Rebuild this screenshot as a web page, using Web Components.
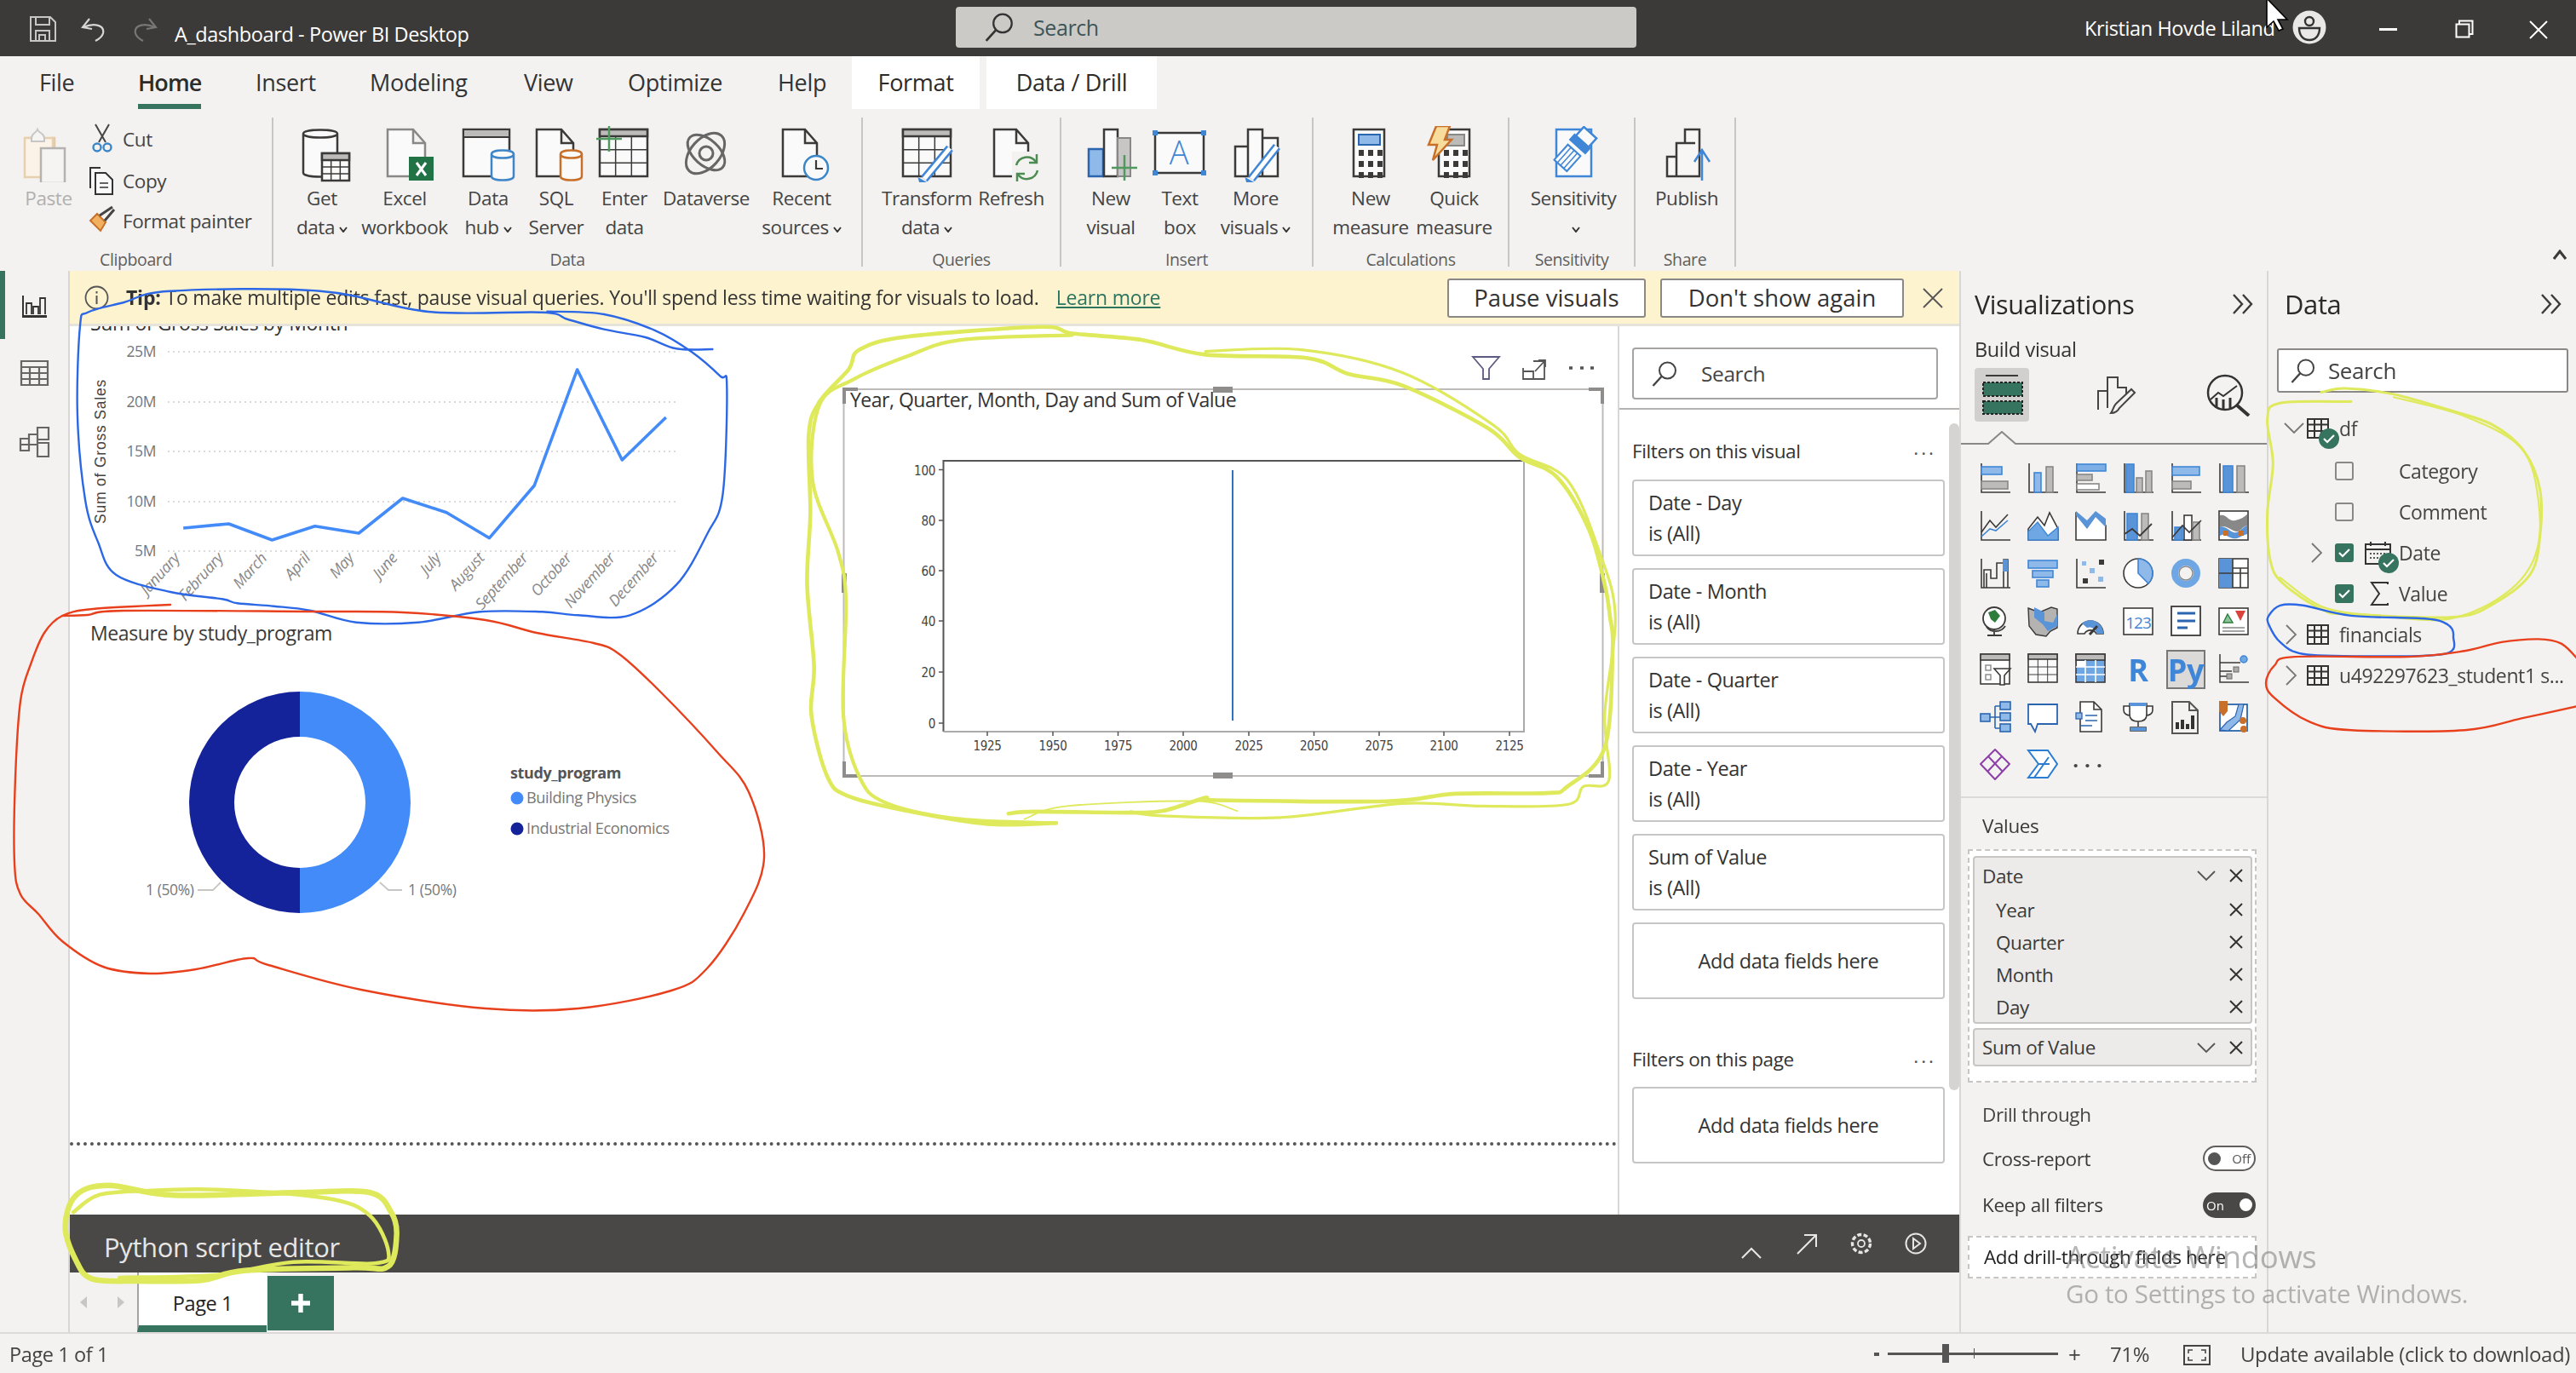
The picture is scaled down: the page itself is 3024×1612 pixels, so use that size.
<!DOCTYPE html>
<html><head><meta charset="utf-8"><title>A_dashboard - Power BI Desktop</title>
<style>
html,body{margin:0;padding:0;background:#f3f2f1;overflow:hidden}
body{font-family:"Open Sans","Noto Sans",sans-serif;color:#3b3a39;letter-spacing:-.025em}
</style></head>
<body>
<pbi-app>
  <pbi-titlebar></pbi-titlebar>
  <pbi-tabbar>
    <pbi-tab w="116">File</pbi-tab><pbi-tab w="138" active>Home</pbi-tab><pbi-tab w="134">Insert</pbi-tab><pbi-tab w="181">Modeling</pbi-tab><pbi-tab w="122">View</pbi-tab><pbi-tab w="176">Optimize</pbi-tab><pbi-tab w="87">Help</pbi-tab><pbi-tab w="150" ctx>Format</pbi-tab><pbi-tab w="200" ctx style="margin-left:8px">Data / Drill</pbi-tab>
  </pbi-tabbar>
  <pbi-ribbon>
    <pbi-rgroup label="Clipboard" w="321">
      <pbi-rbtn c="Paste" icon="paste" w="84" style="margin-left:15px" dis l1="Paste"></pbi-rbtn>
      <pbi-clip></pbi-clip>
    </pbi-rgroup>
    <pbi-rgroup label="Data" w="692">
      <pbi-rbtn icon="get" w="76" style="margin-left:19px" l1="Get" l2="data" caret></pbi-rbtn>
      <pbi-rbtn icon="excel" w="110" style="margin-left:4px" l1="Excel" l2="workbook"></pbi-rbtn>
      <pbi-rbtn icon="hub" w="70" style="margin-left:8px" l1="Data" l2="hub" caret></pbi-rbtn>
      <pbi-rbtn icon="sql" w="70" style="margin-left:10px" l1="SQL" l2="Server"></pbi-rbtn>
      <pbi-rbtn icon="enter" w="70" style="margin-left:10px" l1="Enter" l2="data"></pbi-rbtn>
      <pbi-rbtn icon="dataverse" w="108" style="margin-left:7px" l1="Dataverse"></pbi-rbtn>
      <pbi-rbtn icon="recent" w="108" style="margin-left:4px" l1="Recent" l2="sources" caret></pbi-rbtn>
    </pbi-rgroup>
    <pbi-rgroup label="Queries" w="233">
      <pbi-rbtn icon="transform" w="110" style="margin-left:20px" l1="Transform" l2="data" caret></pbi-rbtn>
      <pbi-rbtn icon="refresh" w="84" style="margin-left:2px" l1="Refresh"></pbi-rbtn>
    </pbi-rgroup>
    <pbi-rgroup label="Insert" w="296">
      <pbi-rbtn icon="newvisual" w="70" style="margin-left:23px" l1="New" l2="visual"></pbi-rbtn>
      <pbi-rbtn icon="textbox" w="70" style="margin-left:11px" l1="Text" l2="box"></pbi-rbtn>
      <pbi-rbtn icon="more" w="100" style="margin-left:4px" l1="More" l2="visuals" caret></pbi-rbtn>
    </pbi-rgroup>
    <pbi-rgroup label="Calculations" w="230">
      <pbi-rbtn icon="measure" w="100" style="margin-left:17px" l1="New" l2="measure"></pbi-rbtn>
      <pbi-rbtn icon="quick" w="92" style="margin-left:2px" l1="Quick" l2="measure"></pbi-rbtn>
    </pbi-rgroup>
    <pbi-rgroup label="Sensitivity" w="148">
      <pbi-rbtn icon="sens" w="130" style="margin-left:10px" l1="Sensitivity" l2="" caret></pbi-rbtn>
    </pbi-rgroup>
    <pbi-rgroup label="Share" w="118">
      <pbi-rbtn icon="publish" w="100" style="margin-left:10px" l1="Publish"></pbi-rbtn>
    </pbi-rgroup>
  </pbi-ribbon>
  <pbi-main>
    <pbi-rail></pbi-rail>
    <pbi-center>
      <pbi-tip></pbi-tip>
      <pbi-body>
        <pbi-canvas>
          <pbi-line-chart></pbi-line-chart>
          <pbi-donut-chart></pbi-donut-chart>
          <pbi-python-visual></pbi-python-visual>
        </pbi-canvas>
        <pbi-filters>
          <pbi-fcard l1="Date - Day" l2="is (All)"></pbi-fcard>
          <pbi-fcard l1="Date - Month" l2="is (All)"></pbi-fcard>
          <pbi-fcard l1="Date - Quarter" l2="is (All)"></pbi-fcard>
          <pbi-fcard l1="Date - Year" l2="is (All)"></pbi-fcard>
          <pbi-fcard l1="Sum of Value" l2="is (All)"></pbi-fcard>
          <pbi-fcard add></pbi-fcard>
          <pbi-fsection>Filters on this page</pbi-fsection>
          <pbi-fcard add></pbi-fcard>
        </pbi-filters>
      </pbi-body>
      <pbi-scriptbar></pbi-scriptbar>
      <pbi-pagebar></pbi-pagebar>
    </pbi-center>
    <pbi-vizpane></pbi-vizpane>
    <pbi-datapane>
      <pbi-tree table open badge>df</pbi-tree>
      <pbi-tree field>Category</pbi-tree>
      <pbi-tree field>Comment</pbi-tree>
      <pbi-tree field checked kind="cal" chev>Date</pbi-tree>
      <pbi-tree field checked kind="sum">Value</pbi-tree>
      <pbi-tree table>financials</pbi-tree>
      <pbi-tree table>u492297623_student1 s...</pbi-tree>
    </pbi-datapane>
  </pbi-main>
  <pbi-status></pbi-status>
  <pbi-watermark></pbi-watermark>
  <pbi-ink></pbi-ink>
</pbi-app>
<script>
const D='#3b3a39',B='#3f86d6',L='#8fb9e8',G='#bdbbb9',GN='#36745f';
function def(name,css,render){
  customElements.define(name,class extends HTMLElement{
    connectedCallback(){
      if(this.shadowRoot)return;
      const r=this.attachShadow({mode:'open'});
      r.innerHTML=`<style>${css}</style>`+(render?render(this):'<slot></slot>');
    }
  });
}
const svg=(w,h,inner,extra='')=>`<svg width="${w}" height="${h}" viewBox="0 0 ${w} ${h}" ${extra} style="display:block;flex:none">${inner}</svg>`;
const doc=(x,y,w,h,s=D,f='#fafafa')=>`<path d="M${x} ${y}H${x+w-14}L${x+w} ${y+16}V${y+h}H${x}Z M${x+w-14} ${y}V${y+16}H${x+w}" fill="${f}" stroke="${s}" stroke-width="2.5"/>`;
const cyl=(x,y,w,h,s)=>`<path d="M${x} ${y+5}V${y+h-5}C${x} ${y+h+1} ${x+w} ${y+h+1} ${x+w} ${y+h-5}V${y+5}C${x+w} ${y-1} ${x} ${y-1} ${x} ${y+5}C${x} ${y+11} ${x+w} ${y+11} ${x+w} ${y+5}" fill="#fafafa" stroke="${s}" stroke-width="2.5"/>`;
function grid(x,y,w,h,cols,rows,hd=8,s=D,sw=2.5){
  let o=`<rect x="${x}" y="${y}" width="${w}" height="${h}" fill="#fafafa" stroke="${s}" stroke-width="${sw}"/><rect x="${x}" y="${y}" width="${w}" height="${hd}" fill="${G}" stroke="${s}" stroke-width="${sw}"/><path d="`;
  for(let i=1;i<cols;i++)o+=`M${x+w*i/cols} ${y+hd}V${y+h}`;
  for(let i=1;i<rows;i++){const yy=y+hd+(h-hd)*i/rows;o+=`M${x} ${yy}H${x+w}`;}
  return o+`" stroke="${s}" stroke-width="${sw*.6}" fill="none"/>`;
}
const pencil=(x1,y1,x2,y2)=>`<path d="M${x1} ${y1}L${x2} ${y2}" stroke="${B}" stroke-width="10" stroke-linecap="butt"/><path d="M${x1} ${y1}L${x2} ${y2}" stroke="#fff" stroke-width="5"/><path d="M${x2-5} ${y2-3}L${x2-3} ${y2+4}L${x2+4} ${y2+2}Z" fill="${B}" stroke="${B}" stroke-width="2" transform="translate(${x1<x2?6:-1} ${y1<y2?3:-1})"/>`;
const plus=(x,y,a,c='#4f9a5e')=>`<path d="M${x-a} ${y}H${x+a}M${x} ${y-a}V${y+a}" stroke="${c}" stroke-width="2.5"/>`;
const calcKeys=(x,y,c=D)=>{let o='';for(let r=0;r<3;r++)for(let k=0;k<3;k++)o+=`<rect x="${x+k*11}" y="${y+r*13}" width="6" height="7" fill="${c}"/>`;return o;};
const RIC={
 paste:`<path d="M8 14H22M38 14H42V40" fill="none" stroke="#e4c9a8" stroke-width="2.5"/><rect x="7" y="14" width="33" height="46" fill="#fbf3e8" stroke="#e8cfae" stroke-width="2.5"/><path d="M15 14C15 8 20 9 22 4 24 9 30 8 30 14V18H15Z" fill="#f5f4f3" stroke="#c8c6c4" stroke-width="2"/><rect x="26" y="26" width="28" height="41" fill="#f5f4f3" stroke="#b5b3b1" stroke-width="2.5"/>`,
 get:cyl(13,4,40,56,D)+grid(35,32,32,32,3,3,8),
 excel:doc(15,4,44,55,'#8a8886')+`<rect x="40" y="36" width="29" height="28" fill="#217346"/><path d="M49 43L60 58M60 43L49 58" stroke="#fff" stroke-width="3"/>`,
 hub:`<rect x="6" y="4" width="54" height="55" fill="#fafafa" stroke="${D}" stroke-width="2.5"/><rect x="6" y="4" width="54" height="9" fill="${G}" stroke="${D}" stroke-width="2"/>`+cyl(39,28,26,36,'#3f86c8'),
 sql:doc(12,4,43,55)+cyl(40,28,25,36,'#c8702a'),
 enter:grid(6,4,56,55,3,3,8)+plus(17,15,15),
 dataverse:`<g fill="none" stroke="#666" stroke-width="3"><ellipse cx="34" cy="32" rx="28" ry="17" transform="rotate(-48 34 32)"/><ellipse cx="35" cy="31" rx="26" ry="15" transform="rotate(42 35 31)"/><circle cx="35" cy="32" r="8"/></g>`,
 recent:doc(13,4,40,55)+`<circle cx="52" cy="49" r="14" fill="#fafafa" stroke="#3a86c8" stroke-width="2.5"/><path d="M52 40V50H60" fill="none" stroke="${D}" stroke-width="2.2"/>`,
 transform:grid(7,4,56,55,3,3,8)+pencil(62,26,32,62),
 refresh:doc(15,4,40,55)+`<rect x="36" y="30" width="34" height="36" fill="#f3f2f1"/><g fill="none" stroke="#4c8c50" stroke-width="2.5"><path d="M41 46A13 13 0 0 1 64 42M66 52A13 13 0 0 1 43 57"/><path d="M65 33V43H56M42 65V56H51"/></g>`,
 newvisual:`<rect x="9" y="27" width="17" height="32" fill="${L}" stroke="#2b65b0" stroke-width="2.5"/><rect x="27" y="4" width="16" height="55" fill="#fafafa" stroke="${D}" stroke-width="2.5"/><rect x="43" y="14" width="15" height="45" fill="#c8c6c4" stroke="#888" stroke-width="2"/>`+plus(51,49,15),
 textbox:`<rect x="6" y="8" width="57" height="47" fill="#fafafa" stroke="${D}" stroke-width="2.5"/><rect x="3" y="5" width="6" height="6" fill="${B}"/><rect x="60" y="5" width="6" height="6" fill="${B}"/><rect x="3" y="52" width="6" height="6" fill="${B}"/><rect x="60" y="52" width="6" height="6" fill="${B}"/><text x="34" y="45" font-size="38" fill="${B}" text-anchor="middle" font-family="Open Sans" font-weight="300">A</text>`,
 more:`<path d="M11 59V24H26V4H43V14H61V59Z M26 24V59M43 14V59" fill="#fafafa" stroke="${D}" stroke-width="2.5"/>`+pencil(60,24,30,62),
 measure:`<rect x="15" y="4" width="36" height="55" fill="#fafafa" stroke="${D}" stroke-width="2.5"/><rect x="21" y="10" width="25" height="12" fill="${L}" stroke="#2b65b0" stroke-width="2"/>`+calcKeys(21,28),
 quick:`<rect x="17" y="4" width="36" height="55" fill="#fafafa" stroke="${D}" stroke-width="2.5"/><rect x="27" y="10" width="20" height="13" fill="${G}" stroke="#888" stroke-width="2"/>`+calcKeys(23,28)+`<path d="M14 0H30L24 16H32L10 40L15 22H5Z" fill="#f7dc9b" stroke="#c8702a" stroke-width="2.5"/>`,
 sens:`<rect x="15" y="4" width="41" height="55" fill="#fafafa" stroke="${B}" stroke-width="2.5"/><g transform="rotate(42 40 24)"><rect x="30" y="2" width="20" height="14" fill="#fafafa" stroke="${B}" stroke-width="2.5"/><rect x="27" y="15" width="26" height="10" fill="${B}"/><rect x="30" y="30" width="20" height="24" fill="#fafafa" stroke="${B}" stroke-width="2"/><path d="M35 30V54M40 30V54M45 30V54" stroke="${B}" stroke-width="1.5"/></g>`,
 publish:`<path d="M12 59V36H23V20H33V4H50V59Z M23 36V59M33 20H45" fill="#f7f6f5" stroke="${D}" stroke-width="2.5"/><path d="M53 64V28M44 42L53 28L62 42" fill="none" stroke="${B}" stroke-width="2.5"/>`
};
const mag=(s=30,c='#444')=>`<svg width="${s}" height="${s}" viewBox="0 0 30 30" style="display:block;flex:none"><circle cx="18.5" cy="11" r="9.5" fill="none" stroke="${c}" stroke-width="2"/><path d="M11.5 18L1.5 29" stroke="${c}" stroke-width="2.4"/></svg>`;
const chev2=()=>svg(26,26,`<path d="M2 2L12 13L2 24M13 2L23 13L13 24" fill="none" stroke="${D}" stroke-width="2.4"/>`);
const xmark=(s=18,c='#444')=>svg(s,s,`<path d="M1 1L${s-1} ${s-1}M${s-1} 1L1 ${s-1}" stroke="${c}" stroke-width="2"/>`);

def('pbi-app',`:host{display:flex;flex-direction:column;width:3024px;height:1612px;position:relative;overflow:hidden;filter:blur(.6px)}`);

def('pbi-titlebar',`:host{display:flex;align-items:center;height:66px;background:#3b3a39;color:#fff;flex:none;position:relative}
.t{position:absolute;left:205px;top:21px;font-size:23.5px;line-height:38px;white-space:nowrap}
.i{position:absolute}
.s{position:absolute;left:1122px;top:8px;width:799px;height:48px;background:#cbcac7;border-radius:4px;display:flex;align-items:center;box-sizing:border-box;padding-left:34px;color:#3e5658;font-size:25px}
.s span{margin-left:23px}
.u{position:absolute;left:2447px;top:17px;font-size:23.5px;line-height:32px;white-space:nowrap}`,()=>`
<div class="i" style="left:35px;top:19px">${svg(31,30,`<path d="M1 1H24L30 7V29H1Z M7 1V10H23V1M7 29V17H23V29M11 29V22H18V29" fill="none" stroke="#c8c6c4" stroke-width="2"/>`)}</div>
<div class="i" style="left:95px;top:20px">${svg(30,30,`<path d="M10 2L2 12L13 14M3 12C16 6 28 10 26 19C25 23 21 26 17 28" fill="none" stroke="#d8d6d4" stroke-width="2.2"/>`)}</div>
<div class="i" style="left:155px;top:20px">${svg(30,30,`<path d="M20 2L28 12L17 14M27 12C14 6 2 10 4 19C5 23 9 26 13 28" fill="none" stroke="#777" stroke-width="2.2"/>`)}</div>
<div class="t">A_dashboard - Power BI Desktop</div>
<div class="s">${mag(34,'#333')}<span>Search</span></div>
<div class="u">Kristian Hovde Liland</div>
<div class="i" style="left:2690px;top:12px">${svg(42,40,`<circle cx="21" cy="20" r="19.5" fill="#e9e8e6"/><circle cx="21" cy="13" r="5" fill="none" stroke="#333" stroke-width="2.4"/><path d="M9 21H33C33 30 28 35 21 35S9 30 9 21Z" fill="none" stroke="#333" stroke-width="2.4"/>`)}</div>
<div class="i" style="left:2793px;top:33px;width:21px;height:3px;background:#fff"></div>
<div class="i" style="left:2882px;top:23px">${svg(22,22,`<path d="M5 5V1.5H20.5V17H17M1.5 5.5H16.5V20.5H1.5Z" fill="none" stroke="#fff" stroke-width="2"/>`)}</div>
<div class="i" style="left:2969px;top:24px">${xmark(22,'#fff')}</div>`);

def('pbi-tabbar',`:host{display:flex;height:62px;background:#f3f2f1;padding-left:46px;flex:none}`);
def('pbi-tab',`:host{display:block;height:62px;box-sizing:border-box;font-size:27px;letter-spacing:-.012em;line-height:62px;white-space:nowrap;position:relative;color:#333;flex:none}
:host([ctx]){background:#fff;text-align:center;color:#2b2a29}
span{display:inline-block;height:62px;position:relative}
:host([active]) span{font-weight:600;color:#2d2c2b;letter-spacing:-.035em}
:host([active]) span::after{content:"";position:absolute;left:0;right:0;bottom:0;height:6px;background:${GN}}`,el=>{el.style.width=el.getAttribute('w')+'px';return '<span><slot></slot></span>'});

def('pbi-ribbon',`:host{display:flex;height:190px;background:#f3f2f1;box-sizing:border-box;padding-top:10px;position:relative;flex:none}
.c{position:absolute;left:2996px;top:165px}`,()=>`<slot></slot><div class="c">${svg(18,12,`<path d="M2 11L9 2L16 11" fill="none" stroke="${D}" stroke-width="3"/>`)}</div>`);
def('pbi-rgroup',`:host{display:flex;flex-direction:column;height:175px;box-sizing:border-box;border-right:2px solid #c8c6c4;flex:none}
.b{display:flex;flex:1;padding-top:10px}
.l{height:16px;line-height:16px;text-align:center;font-size:19.5px;color:#605e5c;white-space:nowrap;margin-bottom:0}`,el=>{el.style.width=el.getAttribute('w')+'px';return `<div class="b"><slot></slot></div><div class="l">${el.getAttribute('label')}</div>`});
def('pbi-rbtn',`:host{display:flex;flex-direction:column;align-items:center;flex:none;font-size:22.5px;color:#444;line-height:34px;white-space:nowrap}
:host([dis]){color:#b2b0ae}
.lab{margin-top:2px;text-align:center}
.lab div{height:34px}
svg.car{display:inline-block;margin-left:5px;vertical-align:2px}`,el=>{
  el.style.width=el.getAttribute('w')+'px';
  const car=el.hasAttribute('caret')?`<svg class="car" width="10" height="7" viewBox="0 0 10 7"><path d="M1 1L5 6L9 1" fill="none" stroke="#333" stroke-width="2"/></svg>`:'';
  const l2=el.getAttribute('l2');
  return svg(70,66,RIC[el.getAttribute('icon')],'')+`<div class="lab"><div>${el.getAttribute('l1')}</div>${l2!==null?`<div>${l2}${car}</div>`:''}</div>`;
});
def('pbi-clip',`:host{display:block;margin-left:5px;font-size:22.5px;color:#444;flex:none}
.r{display:flex;align-items:center;height:30px;white-space:nowrap}
.r span{margin-left:7px}`,()=>`
<div class="r">${svg(33,36,`<path d="M8 1L20 22M24 1L12 22" stroke="#444" stroke-width="2"/><circle cx="10" cy="28" r="4.5" fill="none" stroke="#3a86c8" stroke-width="2.4"/><circle cx="22" cy="28" r="4.5" fill="none" stroke="#3a86c8" stroke-width="2.4"/>`)}<span>Cut</span></div>
<div class="r" style="margin-top:19px">${svg(33,34,`<path d="M2 26V2H14M8 8H20L28 16V33H8Z" fill="#fafafa" stroke="#333" stroke-width="2"/><path d="M13 20H23M13 25H23" stroke="#333" stroke-width="1.6"/>`)}<span>Copy</span></div>
<div class="r" style="margin-top:17px">${svg(33,36,`<path d="M2 18L14 30L20 20L10 10Z" fill="#f0b060" stroke="#c8702a" stroke-width="2"/><path d="M13 12L28 2M19 18L30 5" stroke="#444" stroke-width="3"/>`)}<span>Format painter</span></div>`);

def('pbi-main',`:host{display:flex;flex:1;min-height:0;position:relative;box-shadow:inset 0 5px 4px -3px rgba(0,0,0,.12)}`);
def('pbi-rail',`:host{display:block;width:82px;box-sizing:border-box;border-right:2px solid #d9d7d5;background:#f3f2f1;position:relative;flex:none;padding-top:29px}
.bar{position:absolute;left:0;top:0;width:6px;height:80px;background:${GN}}
svg{margin:0 auto}`,()=>`<div class="bar"></div>
${svg(36,26,`<path d="M5 0V24H33" fill="none" stroke="#333" stroke-width="2"/><path d="M9 22V9H15V22M17 22V13H23V22M25 22V3H31V22" fill="none" stroke="#333" stroke-width="1.8"/><path d="M4 25H33" stroke="#333" stroke-width="2.6"/>`)}
<div style="height:50px"></div>
${svg(36,30,`<path d="M3 1H34V29H3ZM3 8H34M3 15H34M3 22H34M13 8V29M24 8V29" fill="none" stroke="#666" stroke-width="2.2"/>`)}
<div style="height:47px"></div>
${svg(40,38,`<path d="M14 10H24V22H14ZM4 15H14V29H4ZM24 2H37V16H24ZM24 20H37V36H24ZM4 22H14" fill="none" stroke="#666" stroke-width="2.2"/>`)}`);
def('pbi-center',`:host{display:flex;flex-direction:column;width:2218px;flex:none;min-height:0}`);
def('pbi-tip',`:host{display:flex;align-items:center;height:65px;box-sizing:border-box;background:#fdf3cf;border-bottom:3px solid #e6e3da;font-size:23px;letter-spacing:-.2px;color:#333;padding-left:17px;flex:none;white-space:nowrap;position:relative}
.t{margin-left:20px}
b{font-weight:700}
a{color:#2e7560;text-decoration:underline;margin-left:20px}
button{position:absolute;top:9px;height:46px;background:#fff;border:2px solid #8a8886;border-radius:3px;font:inherit;font-size:27.5px;line-height:40px;color:#333;letter-spacing:0;padding:0}
.x{position:absolute;left:2175px;top:20px}`,()=>`
${svg(29,29,`<circle cx="14.5" cy="14.5" r="13" fill="none" stroke="#555" stroke-width="1.8"/><path d="M14.5 12V22M14.5 7V9.5" stroke="#555" stroke-width="2"/>`)}
<span class="t"><b>Tip:</b> To make multiple edits fast, pause visual queries. You'll spend less time waiting for visuals to load.</span><a>Learn more</a>
<button style="left:1617px;width:233px">Pause visuals</button>
<button style="left:1867px;width:286px">Don't show again</button>
<div class="x">${svg(24,24,`<path d="M1 1L23 23M23 1L1 23" stroke="#555" stroke-width="1.8"/>`)}</div>`);
def('pbi-body',`:host{display:flex;flex:1;min-height:0}`);
def('pbi-canvas',`:host{display:block;width:1817px;background:#fff;position:relative;overflow:hidden;flex:none}
.dots{position:absolute;left:0;right:0;top:958px;height:0;border-top:4px dotted #555}`,()=>`<slot></slot><div class="dots"></div>`);

def('pbi-line-chart',`:host{position:absolute;left:-82px;top:-383px;display:block}`,()=>{
  const z=(x,y)=>[x/1.65,320+y/3];
  const pts=[[355,900],[443,885],[527,942],[610,893],[695,918],[780,795],[865,845],[948,935],[1035,750],[1118,342],[1205,660],[1290,510]].map(p=>z(...p).map(n=>n.toFixed(1)).join(',')).join(' ');
  let s=`<text x="106" y="388" font-size="23" fill="#333" letter-spacing="-.4">Sum of Gross Sales by Month</text>`;
  [[413,'25M'],[472,'20M'],[530,'15M'],[589,'10M'],[647,'5M']].forEach(([y,t])=>{
    s+=`<path d="M197 ${y}H796" stroke="#dcdad8" stroke-width="2" stroke-dasharray="2 4"/><text x="183" y="${y+6}" font-size="17.5" fill="#777" text-anchor="end">${t}</text>`;});
  s+=`<text transform="translate(124 530) rotate(-90)" font-family="Liberation Sans" font-size="17.5" fill="#444" text-anchor="middle" letter-spacing=".8">Sum of Gross Sales</text>`;
  s+=`<polyline points="${pts}" fill="none" stroke="#428bf9" stroke-width="3.6" stroke-linejoin="round"/>`;
  ['January','February','March','April','May','June','July','August','September','October','November','December'].forEach((m,i)=>{
    s+=`<text transform="translate(${212+i*51.1} 656) rotate(-48)" font-size="18" fill="#888" text-anchor="end" font-style="italic">${m}</text>`;});
  return svg(900,760,s);
});
def('pbi-donut-chart',`:host{position:absolute;left:-82px;top:-383px;display:block}`,()=>{
  const s=`<text x="106" y="752" font-size="23" fill="#3b3a39" letter-spacing="-.4">Measure by study_program</text>
  <path d="M352 812A130 130 0 0 1 352 1072V1019A77 77 0 0 0 352 865Z" fill="#428bf9"/>
  <path d="M352 812A130 130 0 0 0 352 1072V1019A77 77 0 0 1 352 865Z" fill="#15239a"/>
  <path d="M232 1045H250L259 1036M472 1045H456L446 1036" fill="none" stroke="#c8c6c4" stroke-width="1.8"/>
  <text x="171" y="1051" font-size="17.5" fill="#777">1 (50%)</text><text x="479" y="1051" font-size="17.5" fill="#777">1 (50%)</text>
  <text x="599" y="914" font-size="18" font-weight="700" fill="#555">study_program</text>
  <circle cx="607" cy="937" r="7.5" fill="#428bf9"/><text x="618" y="943" font-size="18.2" fill="#777">Building Physics</text>
  <circle cx="607" cy="973" r="7.5" fill="#15239a"/><text x="618" y="979" font-size="18.2" fill="#777">Industrial Economics</text>`;
  return svg(900,1200,s);
});
def('pbi-python-visual',`:host{position:absolute;left:-82px;top:-383px;display:block}
text{font-family:"DejaVu Sans";fill:#444}`,()=>{
  let s=`
  <path d="M1729 419H1760L1748 433V445H1741V433Z" fill="none" stroke="#5c5a80" stroke-width="1.8"/>
  <path d="M1788 432V445H1813V424H1800M1788 436H1800V445M1802 436L1814 423M1806 423H1814V431" fill="none" stroke="#555" stroke-width="1.8"/>
  <path d="M1842 432h4M1855 432h4M1867 432h4" stroke="#555" stroke-width="3.4"/>
  <rect x="990.5" y="457" width="891" height="454" fill="#fff" stroke="#bdbbb9" stroke-width="2"/>
  <g fill="#8f8d8b"><path d="M989 455H1007V459H993V474H989Z"/><path d="M1883 455H1865V459H1879V474H1883Z"/><path d="M989 913H1007V909H993V894H989Z"/><path d="M1883 913H1865V909H1879V894H1883Z"/>
  <rect x="1424" y="454" width="23" height="7"/><rect x="1424" y="907" width="23" height="7"/><rect x="988" y="673" width="6" height="23"/><rect x="1878" y="673" width="6" height="23"/></g>
  <text x="998" y="478" font-size="23" style="font-family:'Open Sans';fill:#333" letter-spacing="-.5">Year, Quarter, Month, Day and Sum of Value</text>
  <path d="M1107.5 859V541H1789" fill="none" stroke="#555" stroke-width="2"/><path d="M1107.5 859H1789V541" fill="none" stroke="#aaa" stroke-width="2"/>
  <path d="M1447 552V846" stroke="#2f73bd" stroke-width="2"/>`;
  [[551.5,'100'],[611,'80'],[670,'60'],[729,'40'],[789,'20'],[849,'0']].forEach(([y,t])=>{s+=`<path d="M1102 ${y}h5" stroke="#555" stroke-width="1.5"/><text x="1098" y="${y+6}" font-size="16" text-anchor="end" textLength="${t.length*8.3}" lengthAdjust="spacingAndGlyphs">${t}</text>`;});
  [[1159,1925],[1236,1950],[1312.5,1975],[1389,2000],[1466,2025],[1542.5,2050],[1619,2075],[1695,2100],[1772,2125]].forEach(([x,t])=>{s+=`<path d="M${x} 859v5" stroke="#555" stroke-width="1.5"/><text x="${x}" y="881" font-size="16" text-anchor="middle" textLength="33" lengthAdjust="spacingAndGlyphs">${t}</text>`;});
  return svg(1900,1000,s);
});

def('pbi-filters',`:host{display:block;width:401px;box-sizing:border-box;border-left:2px solid #d9d7d5;background:#fff;padding-left:15px;position:relative;flex:none;overflow:hidden}
.s{width:359px;height:61px;box-sizing:border-box;border:2px solid #a6a4a2;border-radius:4px;margin-top:25px;display:flex;align-items:center;padding-left:21px;font-size:24.5px;color:#444}
.s span{margin-left:28px}
.hr{margin:10px 0 0 -15px;height:2px;background:#b5b3b1;width:400px}
.sb{position:absolute;left:387px;top:114px;width:12px;height:783px;background:#d6d4d2;border-radius:6px}`,()=>`<div class="s">${mag(30)}<span>Search</span></div><div class="hr"></div><pbi-fsection style="margin-top:34px;margin-bottom:18px">Filters on this visual</pbi-fsection><slot></slot><div class="sb"></div>`);
def('pbi-fsection',`:host{display:flex;justify-content:space-between;height:30px;line-height:30px;width:360px;font-size:22.5px;color:#333;white-space:nowrap;margin-top:56px;margin-bottom:17px}
i{font-style:normal;letter-spacing:3px;color:#555;line-height:22px;padding-right:3px}`,()=>`<span><slot></slot></span><i>...</i>`);
def('pbi-fcard',`:host{display:block;width:367px;height:90px;box-sizing:border-box;border:2px solid #c8c6c4;border-radius:4px;padding:7px 0 0 17px;font-size:23.5px;line-height:36px;color:#333;margin-bottom:14px;white-space:nowrap}
:host([add]){padding:0;text-align:center;line-height:86px}`,el=>el.hasAttribute('add')?'Add data fields here':`<div>${el.getAttribute('l1')}</div><div>${el.getAttribute('l2')}</div>`);

def('pbi-scriptbar',`:host{display:block;height:68px;background:#4a4846;position:relative;color:#e8e6e4;flex:none}
.t{position:absolute;left:40px;top:18px;line-height:40px;font-size:31px;white-space:nowrap}
.i{position:absolute}`,()=>`<div class="t">Python script editor</div>
<div class="i" style="left:1962px;top:38px">${svg(24,14,`<path d="M1 13L12 2L23 13" fill="none" stroke="#e8e6e4" stroke-width="2"/>`)}</div>
<div class="i" style="left:2026px;top:22px">${svg(26,26,`<path d="M2 24L24 2M10 2H24V16" fill="none" stroke="#e8e6e4" stroke-width="2"/>`)}</div>
<div class="i" style="left:2090px;top:21px">${svg(26,26,`<circle cx="13" cy="13" r="10.5" fill="none" stroke="#e8e6e4" stroke-width="3.4" stroke-dasharray="5 2.4"/><circle cx="13" cy="13" r="4" fill="none" stroke="#e8e6e4" stroke-width="1.8"/>`)}</div>
<div class="i" style="left:2154px;top:21px">${svg(26,26,`<circle cx="13" cy="13" r="11.5" fill="none" stroke="#e8e6e4" stroke-width="2"/><path d="M10 7L18 13L10 19Z" fill="none" stroke="#e8e6e4" stroke-width="2"/>`)}</div>`);
def('pbi-pagebar',`:host{display:flex;height:70px;background:#f3f2f1;position:relative;flex:none;align-items:flex-start;padding-left:79px}
.p{width:152px;height:70px;box-sizing:border-box;background:#fff;border-left:2px solid #a6a4a2;border-bottom:8px solid ${GN};text-align:center;font-size:23.5px;line-height:72px;color:#222}
.a{width:78px;height:64px;background:${GN};margin:4px 0 0 1px;display:flex;align-items:center;justify-content:center}
.n{position:absolute;top:28px}`,()=>`<div class="n" style="left:11px">${svg(10,14,`<path d="M9 0V14L1 7Z" fill="#c8c6c4"/>`)}</div><div class="n" style="left:55px">${svg(10,14,`<path d="M1 0V14L9 7Z" fill="#c8c6c4"/>`)}</div>
<div class="p">Page 1</div><div class="a">${svg(24,24,`<path d="M12 1V23M1 12H23" stroke="#fff" stroke-width="5.4"/>`)}</div>`);

def('pbi-vizpane',`:host{display:block;width:363px;box-sizing:border-box;border-left:2px solid #d9d7d5;border-right:2px solid #d9d7d5;background:#f3f2f1;flex:none;font-size:22.5px;color:#3b3a39;white-space:nowrap}
.h{display:flex;justify-content:space-between;align-items:center;height:40px;margin-top:19px;padding:0 15px 0 16px;font-size:30.5px;font-weight:500;color:#2b2a29}
.bv{margin:19px 0 0 16px;line-height:28px;font-size:23.5px;font-weight:500;color:#333}
.tabs{display:flex;height:63px;margin:8px 0 0 16px;align-items:center}
.sel{width:64px;height:63px;background:#d2d0ce;border-radius:4px;display:flex;align-items:center;justify-content:center}
.no{height:16px;margin-top:11px}
.g{display:grid;grid-template-columns:repeat(6,56px);grid-auto-rows:56px;margin:12px 0 0 12px}
.g>div{display:flex;align-items:center;justify-content:center;position:relative}
.py{box-sizing:border-box}
.py span{display:flex;width:46px;height:46px;box-sizing:border-box;background:#dcdad8;border:2px solid #777;align-items:center;justify-content:center;font-size:36px;font-weight:700;color:${B};font-family:"Open Sans"}
.r{font-size:36px;font-weight:700;color:${B}}
.dots{letter-spacing:7px;font-weight:700;font-size:24px;line-height:10px;color:#444;padding-bottom:12px}
.sep{height:2px;background:#dcdad8;margin-top:9px}
.lab{margin:19px 0 0 25px;line-height:28px}
.well{width:339px;height:274px;box-sizing:border-box;margin:13px 0 0 8px;border:2px dashed #c8c6c4;background:#fff;padding:6px 3px 0 4px}
.grp{background:#edebe9;border:2px solid #c8c6c4;border-radius:4px;box-sizing:border-box;width:328px;padding-top:2px;position:relative}
.row{display:flex;align-items:center;height:38px;padding:0 9px 0 9px}
.row.in{padding-left:25px}
.row span{flex:1}
.row svg+svg{margin-left:16px}
.dr{margin:24px 0 0 25px;line-height:28px;font-weight:500;color:#444}
.tg{display:flex;justify-content:space-between;align-items:center;margin:22px 13px 0 25px;height:30px}
.sw{width:62px;height:30px;box-sizing:border-box;border-radius:15px;border:2px solid #605e5c;background:#fff;display:flex;align-items:center;justify-content:space-between;padding:0 4px;font-size:15px;color:#555;letter-spacing:0}
.sw i{display:block;width:15px;height:15px;border-radius:50%;background:#555}
.sw.on{background:#4a4846;color:#fff;border:0}
.sw.on i{background:#fff}
.dd{margin:21px 0 0 8px;width:339px;height:50px;box-sizing:border-box;border:2px dashed #c8c6c4;background:#fff;line-height:46px;padding-left:17px;color:#222}`,()=>{
  const ax=`<path d="M2 1V35H36" fill="none" stroke="${D}" stroke-width="1.6"/>`;
  const R=(x,y,w,h,f=L,s=B)=>`<rect x="${x}" y="${y}" width="${w}" height="${h}" fill="${f}" stroke="${s}" stroke-width="1.6"/>`;
  const icons=[
   ax+R(2,5,24,9)+R(2,22,31,9,G,'#888'),
   ax+R(8,12,8,23)+R(22,5,8,30,G,'#888'),
   ax+R(2,2,34,8,'#7eaee6')+R(2,14,18,7,G,'#888')+R(2,25,26,7,'#fff','#888'),
   ax+R(4,2,9,33,'#5a94d8')+R(16,18,7,17,G,'#888')+R(27,10,7,25,G,'#888'),
   ax+R(2,5,32,10)+R(2,22,22,9,G,'#888'),
   ax+R(6,4,11,31,'#5a94d8')+R(22,4,9,31,G,'#888'),
   ax+`<path d="M2 26L12 12L19 20L33 5" fill="none" stroke="${D}" stroke-width="1.6"/><path d="M2 31L12 22L19 24L33 12" fill="none" stroke="${B}" stroke-width="1.6"/>`,
   `<path d="M1 35V22L12 8L20 18L26 3L36 22V35Z" fill="#fff" stroke="${D}" stroke-width="1.6"/><path d="M1 35V25L12 14L24 30L36 20V35Z" fill="#6fa7e4" stroke="${B}" stroke-width="1.4"/>`,
   `<path d="M1 35V4L14 20L24 6L36 18V35Z" fill="#fff" stroke="${D}" stroke-width="1.6"/><path d="M1 6L14 22L24 8L36 20V10L24 1L14 12L1 1Z" fill="#5a94d8"/>`,
   ax+R(5,4,12,31,'#5a94d8')+R(22,4,8,31,G,'#888')+`<path d="M2 28L11 22L20 30L34 16" fill="none" stroke="${D}" stroke-width="1.8"/>`,
   ax+R(5,20,9,15,'#5a94d8')+R(16,6,9,29,'#fff',D)+R(26,14,8,21,G,'#888')+`<path d="M2 32L14 18L22 26L36 12" fill="none" stroke="${D}" stroke-width="1.6"/>`,
   `<rect x="1" y="1" width="34" height="34" fill="#fff" stroke="${D}" stroke-width="1.6"/><path d="M2 6C10 4 12 14 20 12S30 8 34 5V18C26 20 26 28 18 24S8 18 2 20Z" fill="#888"/><path d="M2 20C8 18 12 24 18 26S28 20 34 18V28C26 30 22 36 14 32S6 28 2 30Z" fill="#5a94d8"/><rect x="6" y="24" width="6" height="6" fill="#c8702a"/><rect x="24" y="24" width="6" height="6" fill="#c8702a"/>`,
   ax+`<path d="M5 35V14H13V24H20V6H28V2H33V35M28 6V35M8 35V18" fill="none" stroke="${D}" stroke-width="1.6"/><rect x="27" y="2" width="6" height="14" fill="#5a94d8"/>`,
   R(1,3,34,9,'#8fb9e8',B)+R(6,15,24,8,'#8fb9e8',B)+R(11,26,14,8,'#8fb9e8',B),
   ax+`<rect x="8" y="4" width="5" height="5" fill="#8fb9e8"/><rect x="28" y="2" width="6" height="6" fill="${D}"/><rect x="17" y="12" width="6" height="6" fill="#8fb9e8"/><rect x="9" y="24" width="6" height="6" fill="${D}"/><rect x="27" y="22" width="6" height="6" fill="#8fb9e8"/>`,
   `<circle cx="18" cy="18" r="17" fill="#fff" stroke="${D}" stroke-width="1.6"/><path d="M18 1A17 17 0 0 1 30 30L18 18Z" fill="#8fb9e8" stroke="${B}" stroke-width="1.6"/>`,
   `<circle cx="18" cy="18" r="13" fill="none" stroke="#6fa7e4" stroke-width="8"/><circle cx="18" cy="18" r="8" fill="#f3f2f1" stroke="#888" stroke-width="1.4"/>`,
   `<rect x="1" y="1" width="34" height="34" fill="#fff" stroke="${D}" stroke-width="1.6"/><rect x="1" y="1" width="16" height="34" fill="#5a94d8"/><path d="M17 1V35M1 18H35M17 12H35M26 12V35" stroke="${D}" stroke-width="1.6" fill="none"/>`,
   `<circle cx="17" cy="15" r="13" fill="#fff" stroke="${D}" stroke-width="1.8"/><path d="M10 8L18 5L24 12L18 20L13 16Z" fill="#2e7d3a"/><path d="M8 25C13 32 25 32 30 24M17 30V35M9 35H26" fill="none" stroke="${D}" stroke-width="1.8"/>`,
   `<path d="M1 3L14 8L28 2L35 4V26L27 30L22 36L10 34L2 24Z" fill="#b5b3b1" stroke="${D}" stroke-width="1.4"/><path d="M8 2L20 8V18L30 20L35 10V24L24 30L18 22L8 14Z" fill="#5a94d8"/>`,
   `<path d="M3 33A15 15 0 0 1 33 33H25A8 8 0 0 0 11 33Z" fill="#fff" stroke="${D}" stroke-width="1.6"/><path d="M8 21A15 15 0 0 1 33 33H25A8 8 0 0 0 14 26Z" fill="#5a94d8"/><path d="M17 34L26 24" stroke="${D}" stroke-width="3"/>`,
   `<rect x="1" y="3" width="34" height="31" fill="#fff" stroke="${D}" stroke-width="1.6"/><text x="18" y="27" font-size="19" text-anchor="middle" fill="${B}" font-family="Open Sans" letter-spacing="-1">123</text>`,
   `<rect x="1" y="1" width="34" height="34" fill="#fff" stroke="${D}" stroke-width="1.8"/><path d="M8 9H29M8 18H29M8 26H20" stroke="#2b65b0" stroke-width="3"/>`,
   `<rect x="1" y="3" width="34" height="31" fill="#fff" stroke="${D}" stroke-width="1.6"/><path d="M8 10L14 20H3Z" fill="#8bc49a" stroke="#2e7d3a" stroke-width="1.4" transform="translate(3 0)"/><path d="M20 6H32L26 18Z" fill="#d9433a"/><path d="M5 26H31M5 30H31" stroke="#888" stroke-width="1.4"/>`,
   `<rect x="1" y="1" width="34" height="35" fill="#fff" stroke="${D}" stroke-width="1.6"/><rect x="1" y="1" width="34" height="7" fill="${G}" stroke="${D}" stroke-width="1.6"/><rect x="7" y="14" width="6" height="6" fill="#fff" stroke="#888" stroke-width="1.4"/><rect x="7" y="25" width="6" height="6" fill="#fff" stroke="#888" stroke-width="1.4"/><path d="M17 18H36L29 26V37H24V26Z" fill="#fff" stroke="${D}" stroke-width="1.6"/>`,
   grid(1,1,34,33,3,3,6,D,1.6),
   `<rect x="1" y="1" width="34" height="33" fill="#6fa7e4" stroke="${D}" stroke-width="1.6"/><rect x="1" y="1" width="34" height="7" fill="${G}" stroke="${D}" stroke-width="1.6"/><path d="M12 8V34M24 8V34M1 16H35M1 25H35" stroke="#fff" stroke-width="1.6"/><rect x="2" y="9" width="10" height="7" fill="#fff"/>`,
   'R','PY',
   `<path d="M2 1V34H36M2 11H26M2 21H16M2 27H14" fill="none" stroke="${D}" stroke-width="1.5"/><circle cx="30" cy="7" r="4" fill="#6fa7e4" stroke="${B}" stroke-width="1.5"/><rect x="18" y="16" width="6" height="6" fill="#aaa" stroke="#666"/><rect x="10" y="24" width="6" height="6" fill="#aaa" stroke="#666"/>`,
   `<rect x="1" y="15" width="11" height="9" fill="#8fb9e8" stroke="#2b65b0" stroke-width="1.6"/><rect x="24" y="1" width="12" height="9" fill="#8fb9e8" stroke="#2b65b0" stroke-width="1.6"/><rect x="24" y="14" width="12" height="9" fill="#8fb9e8" stroke="#2b65b0" stroke-width="1.6"/><rect x="24" y="27" width="12" height="9" fill="#8fb9e8" stroke="#2b65b0" stroke-width="1.6"/><path d="M12 19H24M18 6V32M18 6H24M18 32H24" fill="none" stroke="#2b65b0" stroke-width="1.6"/>`,
   `<path d="M1 4H35V27H12L9 36L4 27H1Z" fill="#fff" stroke="#2b65b0" stroke-width="1.8"/>`,
   `<path d="M6 1H22L31 10V36H6Z M22 1V10H31" fill="#fff" stroke="${D}" stroke-width="1.6"/><rect x="1" y="14" width="7" height="7" fill="#8fb9e8" stroke="#2b65b0" stroke-width="1.3"/><path d="M12 17H26M12 23H26M6 29H20" stroke="#2b65b0" stroke-width="1.6"/>`,
   `<path d="M8 3H28V16C28 22 23 24 18 24S8 22 8 16ZM8 6H1V11C1 15 5 17 9 17M28 6H35V11C35 15 31 17 27 17M18 24V30M9 31H27V35H9Z" fill="#fff" stroke="${D}" stroke-width="1.6"/><path d="M8 2H28V6H8ZM9 31H27V35H9Z" fill="#5a94d8"/>`,
   `<path d="M2 1H22L32 11V38H2Z M22 1V11H32" fill="#f3f2f1" stroke="#555" stroke-width="2"/><path d="M8 33V25M14 33V22M20 33V27M26 33V17" stroke="#333" stroke-width="4"/>`,
   `<rect x="2" y="4" width="32" height="31" fill="#fff" stroke="#2b65b0" stroke-width="1.8"/><path d="M2 34L10 25L20 18L24 4H30L26 22L12 35Z" fill="#8fb9e8" stroke="#2b65b0" stroke-width="1.2"/><path d="M1 0H11V12L6 18L1 12Z" fill="#c8702a"/><circle cx="29" cy="23" r="4" fill="#c8702a"/><circle cx="30" cy="33" r="4" fill="#c8702a"/>`,
   `<path d="M18 1L35 18L18 36L1 18Z M10 9L27 27M26 9L9 27" fill="none" stroke="#8c3fa8" stroke-width="2" stroke-linejoin="round"/>`,
   `<path d="M1 2H24L35 18L24 34H1L13 18Z M13 18H26M8 34L25 10" fill="#fff" stroke="#2b7cd3" stroke-width="2"/>`,
   'DOTS'
  ];
  const cell=i=>i==='R'?`<div><span class="r">R</span></div>`:i==='PY'?`<div class="py"><span>Py</span></div>`:i==='DOTS'?`<div><span class="dots">...</span></div>`:`<div>${svg(36,38,i,'overflow="visible"')}</div>`;
  const ch=svg(22,14,`<path d="M1 2L11 12L21 2" fill="none" stroke="#555" stroke-width="1.8"/>`);
  const x=xmark(16,'#333');
  return `<div class="h"><span>Visualizations</span>${chev2()}</div>
  <div class="bv">Build visual</div>
  <div class="tabs"><div class="sel">${svg(50,50,`<path d="M6 2H44" stroke="${D}" stroke-width="2"/><rect x="3" y="10" width="46" height="16" fill="${GN}" stroke="#222" stroke-width="2" stroke-dasharray="3 2"/><rect x="3" y="32" width="46" height="15" fill="${GN}" stroke="#222" stroke-width="2" stroke-dasharray="3 2"/>`)}</div>
  <div style="margin-left:80px">${svg(46,46,`<path d="M1 40V18H12V2H24V14H34V26M12 18V38" fill="none" stroke="#444" stroke-width="2"/><path d="M44 20L26 38C24 42 20 44 16 44C19 40 19 36 22 33L40 16Z" fill="#f3f2f1" stroke="#444" stroke-width="2"/>`)}</div>
  <div style="margin-left:82px">${svg(52,50,`<circle cx="22" cy="22" r="20" fill="none" stroke="#333" stroke-width="2.5"/><path d="M5 30L14 22L20 26L36 14" fill="none" stroke="#333" stroke-width="2"/><path d="M12 40V28M20 42V30M28 40V28" stroke="#333" stroke-width="3"/><path d="M35 36L50 49" stroke="#333" stroke-width="4"/>`)}</div></div>
  <div class="no">${svg(359,16,`<path d="M0 15H32L48 1L64 15H359" fill="none" stroke="#8a8886" stroke-width="2"/>`)}</div>
  <div class="g">${icons.map(cell).join('')}</div>
  <div class="sep"></div>
  <div class="lab">Values</div>
  <div class="well">
    <div class="grp" style="height:197px"><div class="row" style="margin-bottom:2px"><span>Date</span>${ch}${x}</div>
    <div class="row in"><span>Year</span>${x}</div><div class="row in"><span>Quarter</span>${x}</div><div class="row in"><span>Month</span>${x}</div><div class="row in"><span>Day</span>${x}</div></div>
    <div class="grp" style="height:45px;margin-top:5px;padding-top:0"><div class="row" style="height:41px"><span>Sum of Value</span>${ch}${x}</div></div>
  </div>
  <div class="dr">Drill through</div>
  <div class="tg"><span>Cross-report</span><div class="sw"><i></i><span>Off</span></div></div>
  <div class="tg" style="margin-top:24px;height:31px"><span>Keep all filters</span><div class="sw on"><span>On</span><i></i></div></div>
  <div class="dd">Add drill-through fields here</div>`;
});

def('pbi-datapane',`:host{display:block;width:361px;box-sizing:border-box;background:#f3f2f1;flex:none;color:#444;font-size:23px;white-space:nowrap;overflow:hidden}
.h{display:flex;justify-content:space-between;align-items:center;height:40px;margin-top:19px;padding:0 16px 0 19px;font-size:31px;font-weight:500;color:#2b2a29}
.s{margin:32px 0 18px 10px;width:342px;height:52px;box-sizing:border-box;background:#fff;border:2px solid #8a8886;border-radius:3px;display:flex;align-items:center;padding-left:14px;font-size:26px;color:#444}
.s span{margin-left:15px}`,()=>`<div class="h"><span>Data</span>${chev2()}</div><div class="s">${mag(29)}<span>Search</span></div><slot></slot>`);
def('pbi-tree',`:host{display:flex;align-items:center;height:48px;white-space:nowrap}
:host([open]){margin-bottom:2px}
.c{display:flex;align-items:center;justify-content:center;position:relative;flex:none}
.cb{width:22px;height:22px;box-sizing:border-box;border:2px solid #8a8886;border-radius:3px;display:flex;align-items:center;justify-content:center;flex:none}
.cb.on{background:${GN};border:0}
.bd{position:absolute;width:24px;height:24px;border-radius:50%;background:${GN};display:flex;align-items:center;justify-content:center}`,el=>{
  const tick=`<svg width="14" height="12" viewBox="0 0 14 12"><path d="M1 6L5 10L13 2" fill="none" stroke="#fff" stroke-width="2.2"/></svg>`;
  const right=svg(14,24,`<path d="M1 1L12 12L1 23" fill="none" stroke="#777" stroke-width="1.8"/>`);
  const down=svg(24,14,`<path d="M1 1L12 12L23 1" fill="none" stroke="#777" stroke-width="1.8"/>`);
  const tbl=svg(26,24,`<path d="M1 1H25V23H1ZM1 7.5H25M1 15H25M9 1V23M17 1V23" fill="none" stroke="#333" stroke-width="2"/>`);
  if(el.hasAttribute('table')){
    const open=el.hasAttribute('open');
    return `<div style="width:15px"></div><div class="c" style="width:30px;justify-content:${open?'center':'flex-start'};padding-left:${open?0:5}px;box-sizing:border-box">${open?down:right}</div>
    <div class="c" style="width:26px">${tbl}${el.hasAttribute('badge')?`<div class="bd" style="left:14px;top:12px">${tick}</div>`:''}</div><div style="width:12px"></div><slot></slot>`;
  }
  const k=el.getAttribute('kind');
  const ic=k==='cal'?`<div class="c" style="width:31px;margin-left:13px">${svg(31,28,`<path d="M1 4H30V27H1ZM1 10H30M7 1V6M24 1V6" fill="none" stroke="#333" stroke-width="2"/><path d="M6 15H25M6 20H25" stroke="#555" stroke-width="2" stroke-dasharray="2 2"/>`)}<div class="bd" style="left:16px;top:14px">${tick}</div></div><div style="width:9px"></div>`
    :k==='sum'?`<div class="c" style="width:22px;margin-left:19px">${svg(22,28,`<path d="M21 3V1H2L11 14L2 27H21V25" fill="none" stroke="#333" stroke-width="2"/>`)}</div><div style="width:12px"></div>`
    :`<div style="width:53px"></div>`;
  return `<div style="width:50px"></div><div class="c" style="width:28px;justify-content:flex-start">${el.hasAttribute('chev')?right:''}</div><div class="cb ${el.hasAttribute('checked')?'on':''}">${el.hasAttribute('checked')?tick:''}</div>${ic}<slot></slot>`;
});

def('pbi-status',`:host{display:block;height:48px;box-sizing:border-box;border-top:2px solid #dcdad8;background:#f3f2f1;position:relative;flex:none;font-size:23.5px;color:#444;white-space:nowrap}
.a{position:absolute;top:6px;line-height:36px}
.bar{position:absolute;left:2216px;top:22px;width:200px;height:3px;background:#555}
.h{position:absolute;left:2280px;top:12px;width:8px;height:22px;background:#555}
.t{position:absolute;left:2317px;top:17px;width:1px;height:12px;background:#555}
.m{position:absolute;left:2200px;top:22px;width:6px;height:4px;background:#555}`,()=>`
<div class="a" style="left:11px">Page 1 of 1</div>
<div class="m"></div><div class="bar"></div><div class="h"></div><div class="t"></div>
<div class="a" style="left:2428px;font-size:26px">+</div>
<div class="a" style="left:2477px;font-size:24px">71%</div>
<div class="a" style="left:2563px;top:13px">${svg(32,24,`<rect x="1" y="1" width="30" height="22" fill="none" stroke="#444" stroke-width="2"/><path d="M6 10V6H11M21 6H26V10M26 14V18H21M11 18H6V14" fill="none" stroke="#444" stroke-width="1.6"/>`)}</div>
<div class="a" style="left:2630px;font-size:24px">Update available (click to download)</div>`);

def('pbi-watermark',`:host{position:absolute;left:2425px;top:1450px;display:block;color:rgba(110,110,110,.5);white-space:nowrap;pointer-events:none;font-family:"Open Sans";letter-spacing:-.02em}
.a{font-size:36.5px;line-height:50px}.b{font-size:29.5px;line-height:36px;margin-top:1px}`,()=>`<div class="a">Activate Windows</div><div class="b">Go to Settings to activate Windows.</div>`);

def('pbi-ink',`:host{position:absolute;left:0;top:0;width:3024px;height:1612px;display:block;pointer-events:none}`,()=>{
  const sp=(pts,closed=false)=>{
    const P=closed?[pts[pts.length-1],...pts,pts[0],pts[1]]:[pts[0],...pts,pts[pts.length-1]];
    let d=`M${P[1][0].toFixed(1)} ${P[1][1].toFixed(1)}`;
    for(let i=1;i<P.length-2;i++){
      const a=P[i-1],b=P[i],c=P[i+1],e=P[i+2];
      d+=`C${(b[0]+(c[0]-a[0])/6).toFixed(1)} ${(b[1]+(c[1]-a[1])/6).toFixed(1)} ${(c[0]-(e[0]-b[0])/6).toFixed(1)} ${(c[1]-(e[1]-b[1])/6).toFixed(1)} ${c[0].toFixed(1)} ${c[1].toFixed(1)}`;
    }
    return d;
  };
  const map=(a,sx,ox,sy,oy)=>a.map(([x,y])=>[ox+x/sx,oy+y/sy]);
  const line=(d,c,w)=>`<path d="${d}" fill="none" stroke="${c}" stroke-width="${w}" stroke-linecap="round" stroke-linejoin="round"/>`;
  const BL='#2c68e6',RD='#e8401c',YG='#dfe95c';
  let o='';
  const blue=map([[1380,270],[1310,268],[1250,228],[1170,200],[1100,165],[1050,140],[830,138],[620,65],[330,65],[240,105],[170,140],[155,190],[150,500],[165,800],[190,950],[225,1065],[330,1125],[430,1150],[460,1165],[530,1175],[600,1190],[690,1232],[810,1232],[930,1195],[1050,1195],[1120,1207],[1220,1207],[1310,1100],[1370,920],[1400,780],[1408,400],[1395,365],[1340,280],[1270,205],[1170,147],[1060,137]],1.65,0,3,320);
  o+=line(sp(blue),BL,2.4);
  const red=[[200,710],[109,715],[73,723],[52,743],[36,780],[24,823],[18,913],[17,1013],[24,1050],[45,1073],[73,1105],[121,1135],[176,1143],[230,1138],[291,1125],[315,1133],[424,1162],[570,1184],[679,1184],[788,1163],[830,1137],[873,1073],[897,1007],[879,930],[842,883],[776,813],[727,768],[697,755],[630,743],[570,728],[473,719],[364,718],[145,717],[103,722],[73,723]];
  o+=line(sp(red),RD,2.4);
  const m6=a=>map(a,1.6,940,2.613,380);
  o+=line(sp(m6([[480,1532],[350,1535],[200,1495],[90,1450],[50,1390],[20,1200],[25,1050],[12,800],[18,580],[15,340],[35,240],[90,140],[110,80],[200,40],[450,10],[510,30],[640,50],[760,95],[950,105],[1030,155],[1130,190],[1290,320],[1350,410],[1420,470],[1480,630],[1510,800],[1520,900],[1525,1000],[1510,1300],[1440,1420],[1400,1440],[1230,1442],[1100,1465],[780,1462],[760,1455],[680,1495],[620,1500],[440,1497],[390,1503]])),YG,4.6);
  o+=line(sp(m6([[510,35],[300,50],[200,100],[100,170],[35,250],[22,480],[70,700],[85,850],[80,1200],[110,1390],[160,1470],[300,1520],[480,1532]])),YG,4.2);
  o+=line(sp(m6([[760,85],[940,80],[1130,150],[1300,310],[1350,400],[1440,480],[1500,700],[1530,900],[1510,1200],[1518,1400],[1470,1420],[1440,1475],[1280,1480],[1130,1472],[900,1515],[680,1510],[620,1497]])),YG,3.2);
  o+=line(sp(m6([[820,1495],[740,1465],[500,1480],[420,1520]])),YG,1.8);
  const m10=a=>map(a,1.568,0,3,1300);
  o+=line(sp(m10([[250,612],[170,605],[140,540],[120,420],[140,310],[200,275],[320,310],[550,300],[680,300],[720,370],[730,450],[715,560],[650,565],[450,575],[370,610],[250,612]])),YG,6.5);
  o+=line(sp(m10([[135,370],[180,310],[260,295],[400,290],[600,320],[680,380],[715,510],[690,550],[540,545],[400,590],[220,600]])),YG,4.5);
  const m9=a=>map(a,3,2660,2.904,320);
  o+=line(sp(m9([[195,408],[280,395],[450,415],[650,470],[800,520],[910,610],[965,740],[965,900],[930,1030],[800,1130],[660,1175],[300,1165],[200,1150],[60,1060],[15,980],[5,820],[25,650],[5,500],[50,445],[300,440]])),YG,3);
  o+=line(sp(m9([[450,425],[700,490],[900,600],[960,780],[950,960],[850,1090],[650,1180],[400,1170],[200,1140],[50,1040]])),YG,2.2);
  o+=line(sp(m9([[10,1170],[50,1135],[130,1135],[300,1170],[560,1180],[640,1200],[660,1240],[630,1300],[350,1308],[130,1300],[50,1260],[10,1200]]),true),BL,2.4);
  o+=line(sp(m9([[1100,1320],[1040,1265],[960,1250],[830,1260],[700,1290],[500,1310],[100,1310],[30,1340],[0,1400],[30,1450],[150,1530],[300,1560],[700,1560],[900,1520],[1100,1478]])),RD,2.4);
  o+=`<path d="M2661 -2V32L2669 25L2675 36L2680 34L2674 23L2685 23Z" fill="#fff" stroke="#000" stroke-width="1.6"/>`;
  return svg(3024,1612,o);
});
</script>
</body></html>
